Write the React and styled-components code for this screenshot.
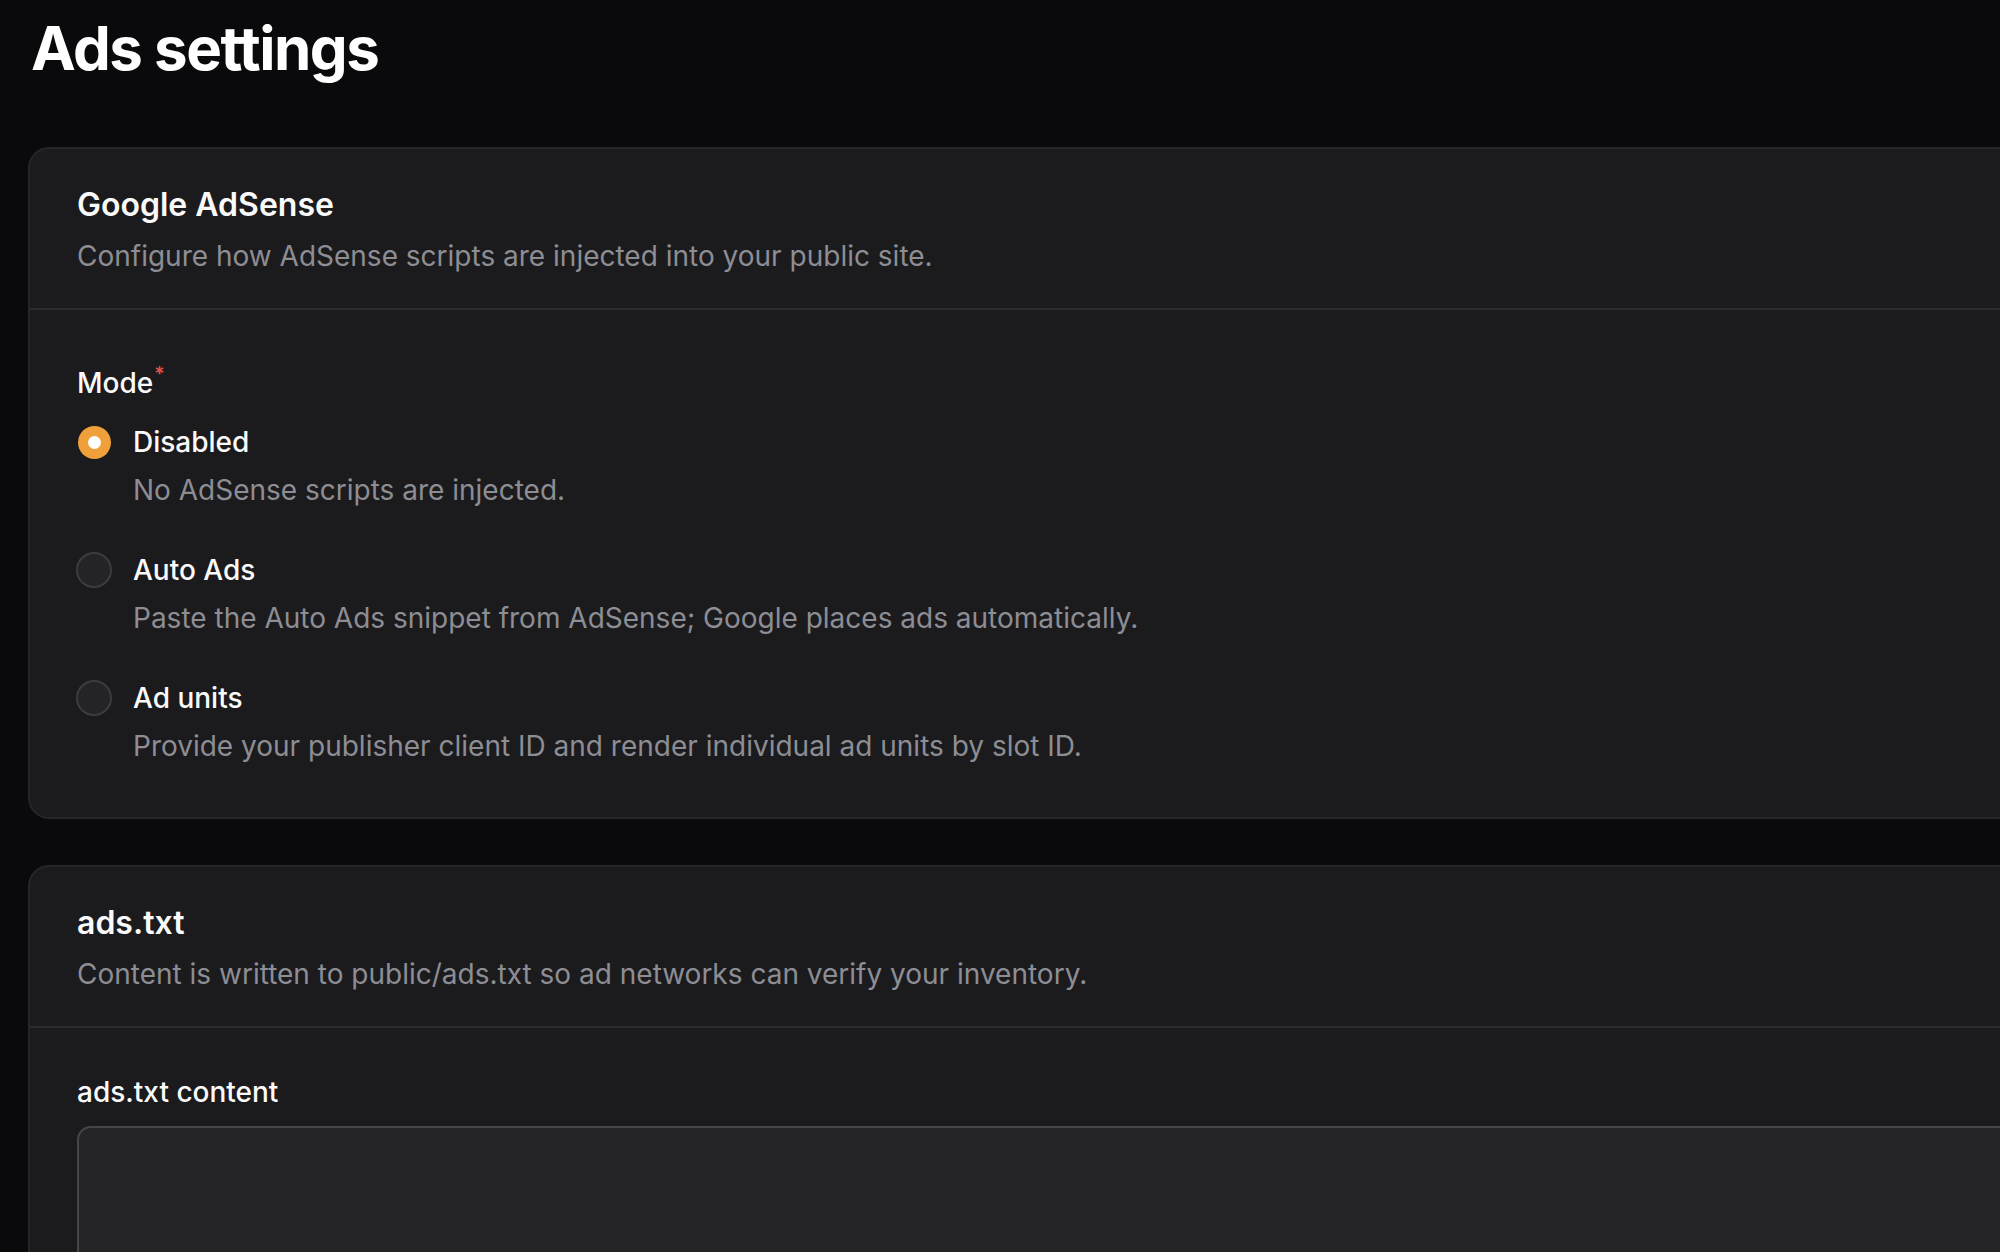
import React from 'react';
import styled, { createGlobalStyle } from 'styled-components';

const GlobalStyle = createGlobalStyle`
    html, body {
        margin: 0;
        padding: 0;
        background: #0a0a0c;
        overflow: hidden;
    }
    body {
        font-family: Inter, "Noto Sans", "Liberation Sans", sans-serif;
        color: #f4f4f5;
        -webkit-font-smoothing: antialiased;
    }
`;

const modes = [
    { id: 'disabled', label: 'Disabled', hint: 'No AdSense scripts are injected.' },
    { id: 'auto', label: 'Auto Ads', hint: 'Paste the Auto Ads snippet from AdSense; Google places ads automatically.' },
    { id: 'units', label: 'Ad units', hint: 'Provide your publisher client ID and render individual ad units by slot ID.' },
];

export default function App() {
    const selected = 'disabled';

    return (
        <Page>
            <GlobalStyle />
            <PageTitle>Ads settings</PageTitle>

            <Card>
                <CardHeader>
                    <CardTitle>Google AdSense</CardTitle>
                    <CardDescription>Configure how AdSense scripts are injected into your public site.</CardDescription>
                </CardHeader>
                <CardBody>
                    <FieldLabel>
                        Mode<Required>*</Required>
                    </FieldLabel>
                    <RadioGroup>
                        {modes.map((m) => (
                            <RadioOption key={m.id}>
                                <RadioRow>
                                    <RadioSlot>
                                        <RadioDot $checked={m.id === selected} />
                                    </RadioSlot>
                                    <OptionLabel>{m.label}</OptionLabel>
                                </RadioRow>
                                <OptionHint>{m.hint}</OptionHint>
                            </RadioOption>
                        ))}
                    </RadioGroup>
                </CardBody>
            </Card>

            <Card>
                <CardHeader>
                    <CardTitle>ads.txt</CardTitle>
                    <CardDescription>Content is written to public/ads.txt so ad networks can verify your inventory.</CardDescription>
                </CardHeader>
                <CardBody>
                    <FieldLabel>ads.txt content</FieldLabel>
                    <TextArea />
                </CardBody>
            </Card>
        </Page>
    );
}

const Page = styled.div`
    width: 2300px;
    padding: 11px 28px 40px;
    box-sizing: border-box;
    display: flex;
    flex-direction: column;
    gap: 46px;
`;

const PageTitle = styled.h1`
    margin: 0 0 15px;
    padding-left: 3px;
    font-size: 60px;
    line-height: 75px;
    font-weight: 700;
    letter-spacing: -0.025em;
    color: #ffffff;
`;

const Card = styled.section`
    background: #1b1b1e;
    border: 2px solid #262629;
    border-radius: 21px;
`;

const CardHeader = styled.div`
    padding: 35px 47px 31px;
    border-bottom: 2px solid #2c2c2f;
`;

const CardTitle = styled.h2`
    margin: 0;
    font-size: 32px;
    line-height: 42px;
    font-weight: 600;
    color: #fafafa;
`;

const CardDescription = styled.p`
    margin: 9px 0 0;
    font-size: 28px;
    line-height: 42px;
    color: #8d8d94;
`;

const CardBody = styled.div`
    padding: 43px 47px 50px;
`;

const FieldLabel = styled.div`
    font-size: 28px;
    line-height: 42px;
    font-weight: 500;
    color: #fafafa;
`;

const Required = styled.span`
    color: #e5534b;
    font-size: 20px;
    vertical-align: 12px;
    margin-left: 1px;
`;

const RadioGroup = styled.div`
    margin-top: 17px;
    display: flex;
    flex-direction: column;
    gap: 38px;
`;

const RadioOption = styled.div`
    display: flex;
    flex-direction: column;
    gap: 6px;
`;

const RadioRow = styled.div`
    display: flex;
    align-items: center;
    gap: 22px;
`;

const RadioSlot = styled.div`
    width: 34px;
    height: 42px;
    display: flex;
    align-items: center;
    justify-content: center;
`;

const RadioDot = styled.span`
    box-sizing: border-box;
    display: flex;
    align-items: center;
    justify-content: center;
    border-radius: 50%;
    width: ${(p) => (p.$checked ? '33px' : '36px')};
    height: ${(p) => (p.$checked ? '33px' : '36px')};
    background: ${(p) => (p.$checked ? '#f0a03a' : '#242427')};
    border: ${(p) => (p.$checked ? 'none' : '2px solid #3c3c40')};
    flex-shrink: 0;

    &::after {
        content: '';
        display: ${(p) => (p.$checked ? 'block' : 'none')};
        width: 13px;
        height: 13px;
        border-radius: 50%;
        background: #ffffff;
    }
`;

const OptionLabel = styled.span`
    font-size: 28px;
    line-height: 42px;
    font-weight: 500;
    color: #fafafa;
`;

const OptionHint = styled.div`
    padding-left: 56px;
    font-size: 28px;
    line-height: 42px;
    color: #8d8d94;
`;

const TextArea = styled.textarea`
    display: block;
    margin-top: 13px;
    width: 100%;
    height: 280px;
    box-sizing: border-box;
    background: #252527;
    border: 2px solid #46464a;
    border-radius: 14px;
    resize: none;
    outline: none;
    font-family: inherit;
    font-size: 28px;
    color: #fafafa;
    padding: 18px 24px;
`;
